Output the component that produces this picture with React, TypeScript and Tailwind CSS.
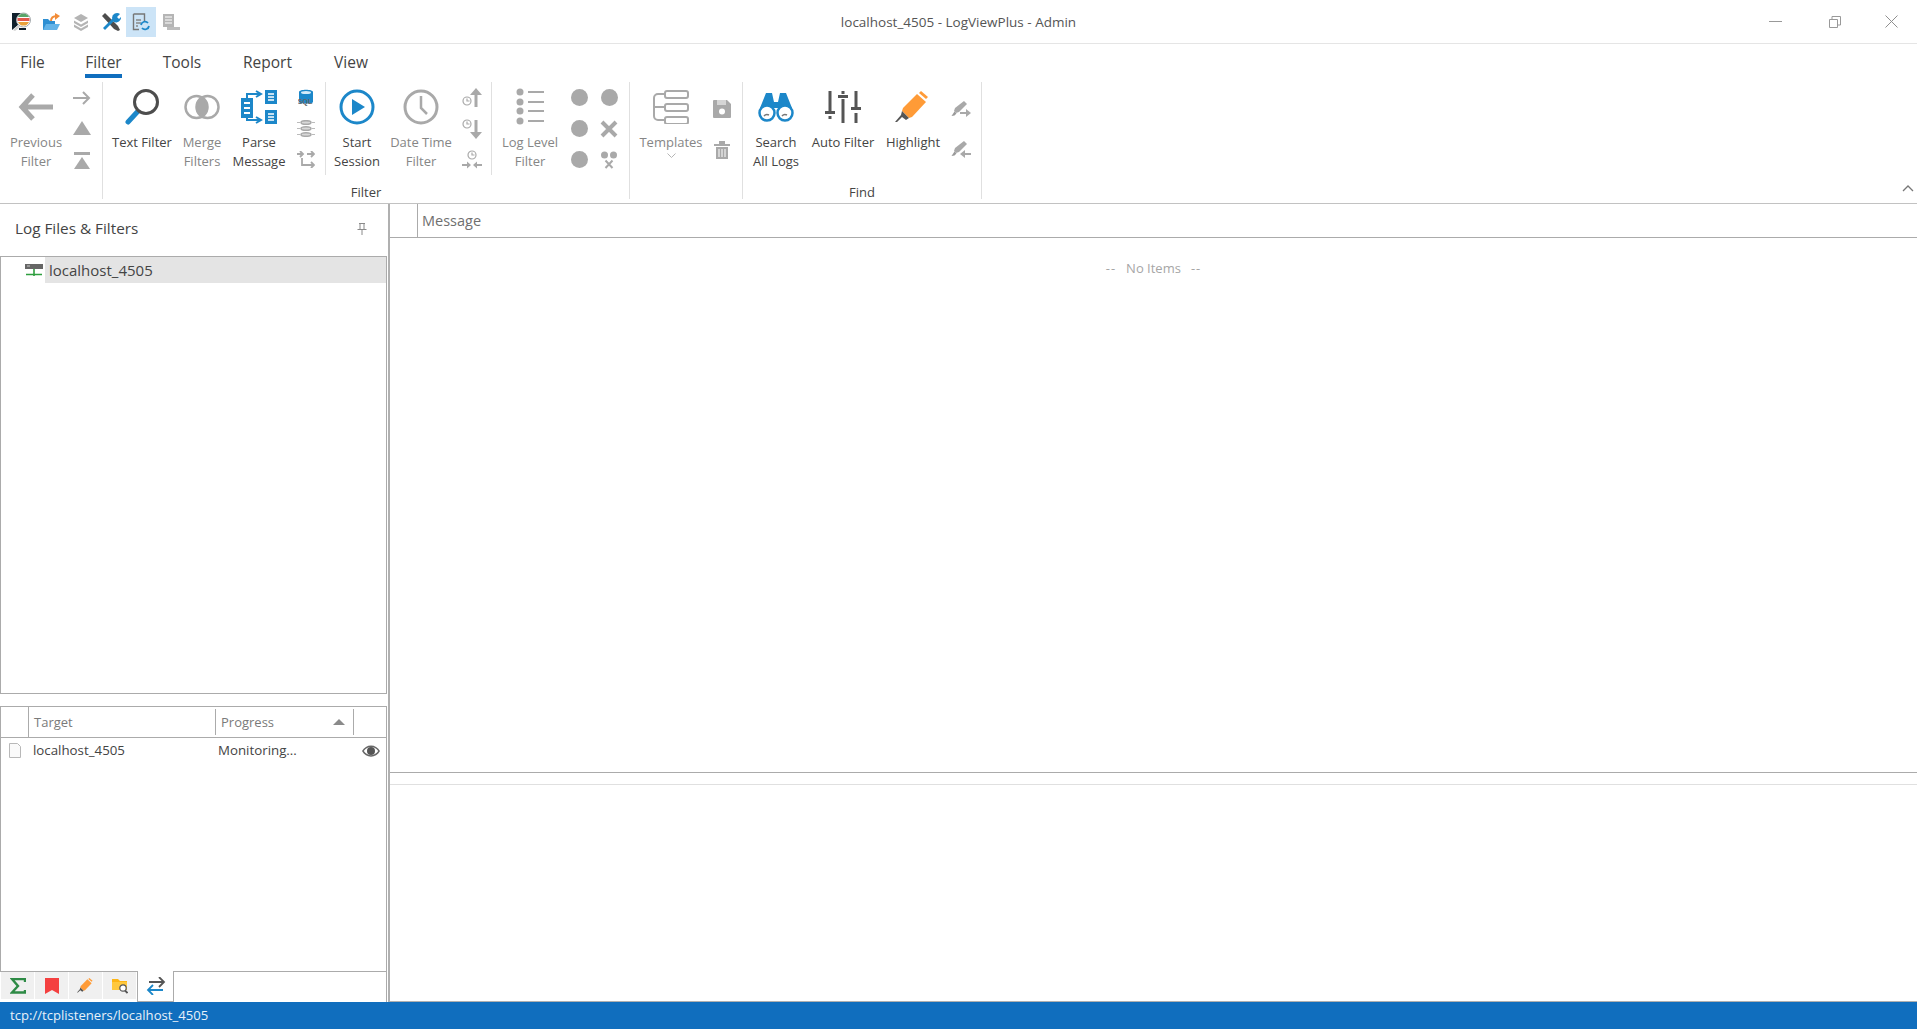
import React from 'react';

const GRAY = '#a9a9a9';
const BLUE = '#1c87c9';
const DARK = '#4d4d4d';

const Svg: React.FC<{ w: number; h: number; children: React.ReactNode }> = ({ w, h, children }) => (
  <svg width={w} height={h} viewBox={`0 0 ${w} ${h}`} fill="none" className="block shrink-0">
    {children}
  </svg>
);

// ---- quick access icons ----
const AppLogo = () => (
  <Svg w={20} h={20}>
    <path d="M1 1h10v4L7 8v5l-6 5z" fill="#10202c" />
    <path d="M8 18h7v-2H8z" fill="#10202c" />
    <circle cx="12.500" cy="8" r="7" fill="#fff" stroke="#a5abae" />
    <path d="M7 5a6 6 0 0 1 11 0z" fill="#5aa469" />
    <path d="M6.500 6h12v3h-12z" fill="#e2574c" />
    <path d="M7 10h11a6 6 0 0 1-11 0z" fill="#e9a13b" />
    <path d="M7 13l-5 5 2 1 5-4z" fill="#d2d2d2" />
  </Svg>
);
const OpenFolder = () => (
  <Svg w={19} h={18}>
    <path d="M1 6h5l2 2h5v9H1z" fill="#2e8fd2" />
    <path d="M4 11h14l-3 6H1z" fill="#63b3e8" />
    <path d="M9 8c0-3 2-5 6-5" stroke="#f28c38" strokeWidth="2" />
    <path d="M13 0l5 3-5 4z" fill="#f28c38" />
  </Svg>
);
const Layers = () => (
  <Svg w={16} h={18}>
    <path d="M8 1l7 4-7 4-7-4z" fill="#b4b4b4" />
    <path d="M1 7.500l7 4 7-4v2.500l-7 4-7-4z" fill="#b4b4b4" />
    <path d="M1 11.500l7 4 7-4v2.500l-7 4-7-4z" fill="#b4b4b4" />
  </Svg>
);
const Wrench = () => (
  <Svg w={20} h={20}>
    <path d="M1 4l3-3 13 13 2 4-2 1-4-2z" fill={DARK} />
    <path d="M2 16L12 6l2 2L4 18z" fill={BLUE} />
    <path d="M11 6a5 5 0 0 1 8-4l-3 3 2 2 2-2a5 5 0 0 1-7 5z" fill={BLUE} />
  </Svg>
);
const ReloadDoc = () => (
  <Svg w={18} h={18}>
    <path d="M1.500 1h11v7M7 16.500H1.500V1" stroke="#777" strokeWidth="1.400" />
    <path d="M4 7h5M4 10h5M4 13h2" stroke="#888" strokeWidth="1.300" />
    <path d="M9 12a4 4 0 0 1 7-2M17 13a4 4 0 0 1-7 2" stroke={BLUE} strokeWidth="1.800" />
  </Svg>
);
const ServerDoc = () => (
  <Svg w={18} h={18}>
    <path d="M1 1h11v13H1z" fill="#b5b5b5" />
    <path d="M3 4h7M3 7h7M3 10h7" stroke="#fff" strokeWidth="1.200" />
    <path d="M5 14h13v3H5z" fill="#bdbdbd" />
  </Svg>
);

// ---- ribbon icons ----
const BackArrow = () => (
  <Svg w={36} h={28}>
    <path d="M35 14H5M15 2L4 14l11 12" stroke={GRAY} strokeWidth="5" />
  </Svg>
);
const SmallArrow = () => (
  <Svg w={18} h={14}>
    <path d="M0 7h16M10 1l6 6-6 6" stroke={GRAY} strokeWidth="2" />
  </Svg>
);
const TriUp = () => (
  <Svg w={18} h={15}>
    <path d="M9 0l9 14H0z" fill={GRAY} />
  </Svg>
);
const TriTop = () => (
  <Svg w={18} h={18}>
    <path d="M1 1h16v3H1z" fill={GRAY} />
    <path d="M9 6l8 12H1z" fill={GRAY} />
  </Svg>
);
const Lens = () => (
  <Svg w={36} h={36}>
    <path d="M4 33l12-13" stroke={BLUE} strokeWidth="5" strokeLinecap="round" />
    <circle cx="22" cy="13" r="11.500" stroke={DARK} strokeWidth="3" fill="#fff" />
  </Svg>
);
const Merge = () => (
  <Svg w={36} h={26}>
    <path d="M18 3a12 12 0 0 1 0 20 12 12 0 0 1 0-20z" fill={GRAY} />
    <circle cx="12.500" cy="13" r="11" stroke={GRAY} strokeWidth="2.500" />
    <circle cx="23.500" cy="13" r="11" stroke={GRAY} strokeWidth="2.500" />
  </Svg>
);
const Parse = () => (
  <Svg w={36} h={36}>
    <path d="M0 9h12v20H0z" fill={BLUE} />
    <path d="M3 14h6M3 19h6M3 24h6" stroke="#fff" strokeWidth="1.800" />
    <path d="M24 1h12v14H24zM24 21h12v14H24z" fill={BLUE} />
    <path d="M27 5h6M27 8h6M27 11h6M27 25h6M27 28h6M27 31h6" stroke="#fff" strokeWidth="1.600" />
    <path d="M6 9V5h14M6 29v2h14M15 2l5 3-5 3M15 28l5 3-5 3" stroke={BLUE} strokeWidth="2" />
  </Svg>
);
const SqlDb = () => (
  <Svg w={16} h={17}>
    <path d="M1 3c0-3 14-3 14 0v10c0 2-14 2-14 0z" fill={BLUE} />
    <ellipse cx="8" cy="3.500" rx="5" ry="1.500" fill="#d5ebf8" />
    <text x="7" y="15" textAnchor="middle" fontSize="7" fontWeight="700" fill="#666" fontFamily="Liberation Sans, sans-serif">
      SQL
    </text>
  </Svg>
);
const DbStripes = () => (
  <Svg w={18} h={17}>
    <path d="M0 2.500h3M15 2.500h3M0 8.500h3M15 8.500h3M0 14.500h3M15 14.500h3" stroke="#bbb" strokeWidth="1.200" />
    <g stroke={GRAY} strokeWidth="1.500" fill="#d8d8d8">
      <ellipse cx="9" cy="2.500" rx="5" ry="1.800" />
      <ellipse cx="9" cy="8.500" rx="5" ry="1.800" />
      <ellipse cx="9" cy="14.500" rx="5" ry="1.800" />
    </g>
  </Svg>
);
const Branches = () => (
  <Svg w={18} h={17}>
    <path d="M0 3h6M3 0l3 3-3 3M10 3h7M14 0l3 3-3 3" stroke={GRAY} strokeWidth="1.800" />
    <path d="M5 7v7h12M14 11l3 3-3 3" stroke={GRAY} strokeWidth="1.800" />
  </Svg>
);
const PlayCircle = () => (
  <Svg w={36} h={36}>
    <circle cx="18" cy="18" r="16" stroke={BLUE} strokeWidth="3" />
    <path d="M13 10l13 8-13 8z" fill={BLUE} />
  </Svg>
);
const Clock = () => (
  <Svg w={36} h={36}>
    <circle cx="18" cy="18" r="16" stroke={GRAY} strokeWidth="3" />
    <path d="M18 7v12l6 6" stroke={GRAY} strokeWidth="2.500" />
  </Svg>
);
const MiniClock: React.FC<{ x: number; y: number }> = ({ x, y }) => (
  <g stroke={GRAY} strokeWidth="1.200">
    <circle cx={x} cy={y} r="4" />
    <path d={`M${x} ${y - 2.500}v2.500h2.500`} />
  </g>
);
const ClockUp = () => (
  <Svg w={20} h={20}>
    <MiniClock x={5} y={13} />
    <path d="M14 19V4" stroke={GRAY} strokeWidth="3" />
    <path d="M14 0l6 7H8z" fill={GRAY} />
  </Svg>
);
const ClockDown = () => (
  <Svg w={20} h={20}>
    <MiniClock x={5} y={5} />
    <path d="M14 1v15" stroke={GRAY} strokeWidth="3" />
    <path d="M14 20l6-7H8z" fill={GRAY} />
  </Svg>
);
const ClockIn = () => (
  <Svg w={20} h={20}>
    <MiniClock x={10} y={5} />
    <path d="M0 15h6M13 15h7" stroke={GRAY} strokeWidth="1.800" />
    <path d="M9 15l-4-3.500v7zM11 15l4-3.500v7z" fill={GRAY} />
  </Svg>
);
const LevelList = () => (
  <Svg w={30} h={38}>
    <g fill={GRAY}>
      <circle cx="5" cy="4" r="3.500" />
      <circle cx="5" cy="14" r="3.500" />
      <circle cx="5" cy="23" r="3.500" />
      <circle cx="5" cy="33" r="3.500" />
    </g>
    <path d="M13 4h16M13 14h16M13 23h16M13 33h16" stroke={GRAY} strokeWidth="2" />
  </Svg>
);
const Dot = () => <div className="w-[17px] h-[17px] rounded-full bg-[#a9a9a9]" />;
const BigX = () => (
  <Svg w={18} h={18}>
    <path d="M2 2l14 14M16 2L2 16" stroke={GRAY} strokeWidth="4" />
  </Svg>
);
const DotsX = () => (
  <Svg w={18} h={18}>
    <circle cx="4.500" cy="4" r="3.500" fill={GRAY} />
    <circle cx="13.500" cy="4" r="3.500" fill={GRAY} />
    <path d="M5.500 9.500l7 7.500M12.500 9.500l-7 7.500" stroke={GRAY} strokeWidth="2" />
  </Svg>
);
const TemplateTree = () => (
  <Svg w={36} h={34}>
    <g stroke={GRAY} strokeWidth="2">
      <rect x="12" y="1" width="23" height="7" rx="2" />
      <rect x="12" y="14" width="23" height="7" rx="2" />
      <rect x="12" y="27" width="23" height="7" rx="2" />
      <path d="M12 4H5a4 4 0 0 0-4 4v18a4 4 0 0 0 4 4h7M1 17h11" />
    </g>
  </Svg>
);
const Save = () => (
  <Svg w={18} h={18}>
    <path d="M0 1a1 1 0 0 1 1-1h13l4 4v13a1 1 0 0 1-1 1H1a1 1 0 0 1-1-1z" fill={GRAY} />
    <path d="M4 0h9v5H4z" fill="#d5d5d5" />
    <circle cx="9" cy="11.500" r="3" fill="#fff" />
  </Svg>
);
const Trash = () => (
  <Svg w={16} h={18}>
    <path d="M0 3h16v2H0zM5 0h6v3H5z" fill={GRAY} />
    <path d="M2 6h12v12H2z" fill={GRAY} />
    <path d="M5 8v8M8 8v8M11 8v8" stroke="#fff" strokeWidth="1" />
  </Svg>
);
const Binoculars = () => (
  <Svg w={36} h={30}>
    <path d="M8 1h6l2 9h4l2-9h6l6 15H2z" fill={BLUE} />
    <circle cx="9" cy="21" r="7.500" fill="#fff" stroke={BLUE} strokeWidth="2.500" />
    <circle cx="27" cy="21" r="7.500" fill="#fff" stroke={BLUE} strokeWidth="2.500" />
    <path d="M6 24a4 4 0 0 1 5-1M24 24a4 4 0 0 1 5-1" stroke="#777" strokeWidth="1.500" />
  </Svg>
);
const Sliders = () => (
  <Svg w={36} h={32}>
    <g stroke="#555" strokeWidth="3">
      <path d="M5 0v20M5 25v3M18 0v3M18 8v24M31 0v16M31 22v10" />
      <path d="M0 21.500h10M13 5.500h10M26 17.500h10" />
    </g>
  </Svg>
);
const Marker: React.FC<{ size?: number }> = ({ size = 36 }) => (
  <svg width={size} height={size} viewBox="0 0 36 36" fill="none" className="block shrink-0">
    <path d="M26 2l7 6-2 2-7-6z" fill="#ff9b37" />
    <path d="M22 5l9 8-14 15-3 1-7-7 1-3z" fill="#ff9b37" />
    <path d="M7 22l7 7-3 2-4-3-5 5H0l6-7z" fill="#555" />
  </svg>
);
const GrayPen: React.FC<{ back?: boolean }> = ({ back }) => (
  <Svg w={20} h={18}>
    <path d="M13 0l3 3-8 8-3 1-2-2 1-3z" fill={GRAY} />
    <path d="M3.500 10.500l2 2-2 2-3 .5z" fill="#999" />
    {back ? (
      <>
        <path d="M20 13h-8" stroke={GRAY} strokeWidth="2" />
        <path d="M9 13l5-4v8z" fill={GRAY} />
      </>
    ) : (
      <>
        <path d="M9 12h8" stroke={GRAY} strokeWidth="2" />
        <path d="M20 12l-5-4v8z" fill={GRAY} />
      </>
    )}
  </Svg>
);

// ---- ribbon pieces ----
const LargeButton: React.FC<{
  width: string;
  lines: string[];
  disabled?: boolean;
  icon: React.ReactNode;
  chevron?: boolean;
}> = ({ width, lines, disabled, icon, chevron }) => (
  <div className={`${width} shrink-0 flex flex-col items-center`}>
    <div className="h-[51px] flex items-center justify-center pb-[1px]">{icon}</div>
    {lines.map((line) => (
      <div key={line} className={`h-[19px] leading-[19px] text-[13px] whitespace-nowrap ${disabled ? 'text-[#868686]' : 'text-[#444444]'}`}>
        {line}
      </div>
    ))}
    {chevron && (
      <svg width="9" height="5" viewBox="0 0 9 5" fill="none" className="mt-[1px]">
        <path d="M.5.5l4 4 4-4" stroke="#b5b5b5" />
      </svg>
    )}
  </div>
);

const SmallColumn: React.FC<{ width: string; slot?: string; pad?: string; items: React.ReactNode[] }> = ({
  width,
  slot = 'h-[31px]',
  pad = '',
  items,
}) => (
  <div className={`${width} ${pad} shrink-0 flex flex-col items-center`}>
    {items.map((item, i) => (
      <div key={i} className={`${slot} flex items-center justify-center`}>
        {item}
      </div>
    ))}
  </div>
);

const GroupLabel: React.FC<{ text: string }> = ({ text }) => (
  <div className="flex-1 min-h-0 text-center leading-[20px] pt-[7px] text-[13px] text-[#444444]">{text}</div>
);

const Ribbon: React.FC = () => (
  <div className="h-[124px] shrink-0 flex pt-[2px] border-b border-[#c2c2c2]">
    <div className="w-[103px] h-[117px] shrink-0 flex border-r border-[#e0e0e0]">
      <LargeButton width="w-[72px]" lines={['Previous', 'Filter']} disabled icon={<BackArrow />} />
      <SmallColumn width="w-[20px]" items={[<SmallArrow />, <TriUp />, <TriTop />]} />
    </div>

    <div className="w-[527px] h-[117px] shrink-0 flex flex-col border-r border-[#e0e0e0]">
      <div className="h-[93px] shrink-0 flex">
        <div className="w-[223px] shrink-0 flex border-r border-[#e0e0e0]">
          <LargeButton width="w-[78px]" lines={['Text Filter']} icon={<Lens />} />
          <LargeButton width="w-[42px]" lines={['Merge', 'Filters']} disabled icon={<Merge />} />
          <LargeButton width="w-[72px]" lines={['Parse', 'Message']} icon={<Parse />} />
          <SmallColumn width="w-[22px]" items={[<SqlDb />, <DbStripes />, <Branches />]} />
        </div>
        <div className="w-[166px] shrink-0 flex border-r border-[#e0e0e0]">
          <LargeButton width="w-[62px]" lines={['Start', 'Session']} icon={<PlayCircle />} />
          <LargeButton width="w-[66px]" lines={['Date Time', 'Filter']} disabled icon={<Clock />} />
          <SmallColumn width="w-[36px]" items={[<ClockUp />, <ClockDown />, <ClockIn />]} />
        </div>
        <div className="flex-1 flex">
          <LargeButton width="w-[76px]" lines={['Log Level', 'Filter']} disabled icon={<LevelList />} />
          <SmallColumn width="w-[22px]" items={[<Dot />, <Dot />, <Dot />]} />
          <SmallColumn width="w-[38px]" items={[<Dot />, <BigX />, <DotsX />]} />
        </div>
      </div>
      <GroupLabel text="Filter" />
    </div>

    <div className="w-[113px] h-[117px] shrink-0 flex border-r border-[#e0e0e0]">
      <LargeButton width="w-[82px]" lines={['Templates']} disabled chevron icon={<TemplateTree />} />
      <SmallColumn width="w-[20px]" slot="h-[41px]" pad="pt-[6px]" items={[<Save />, <Trash />]} />
    </div>

    <div className="w-[239px] h-[117px] shrink-0 flex flex-col border-r border-[#e0e0e0]">
      <div className="h-[93px] shrink-0 flex">
        <LargeButton width="w-[66px]" lines={['Search', 'All Logs']} icon={<Binoculars />} />
        <LargeButton width="w-[68px]" lines={['Auto Filter']} icon={<Sliders />} />
        <LargeButton width="w-[72px]" lines={['Highlight']} icon={<Marker />} />
        <SmallColumn width="w-[24px]" slot="h-[40px]" pad="pt-[8px]" items={[<GrayPen />, <GrayPen back />]} />
      </div>
      <GroupLabel text="Find" />
    </div>

    <div className="flex-1 flex justify-end items-end pr-[3px] pb-[11px]">
      <svg width="12" height="7" viewBox="0 0 12 7" fill="none">
        <path d="M1 6l5-5 5 5" stroke="#777" strokeWidth="1.300" />
      </svg>
    </div>
  </div>
);

// ---- title bar / tabs ----
const TitleBar: React.FC = () => (
  <div className="h-[44px] shrink-0 grid grid-cols-[1fr_auto_1fr] items-center border-b border-[#e5e5e5]">
    <div className="flex items-center pl-[6px]">
      {[<AppLogo />, <OpenFolder />, <Layers />, <Wrench />, <ReloadDoc />, <ServerDoc />].map((icon, i) => (
        <div key={i} className={`w-[30px] h-[30px] flex items-center justify-center ${i === 4 ? 'bg-[#cce4f7]' : ''}`}>
          {icon}
        </div>
      ))}
    </div>
    <div className="text-[13.5px] text-[#555555] pt-[1px]">localhost_4505 - LogViewPlus - Admin</div>
    <div className="flex justify-end items-center text-[#8f8f8f]">
      <div className="w-[58px] flex justify-center">
        <svg width="13" height="1" viewBox="0 0 13 1">
          <path d="M0 .5h13" stroke="#999" />
        </svg>
      </div>
      <div className="w-[61px] flex justify-center">
        <svg width="12" height="12" viewBox="0 0 12 12" fill="none">
          <path d="M.5 3.500h8v8h-8zM3 3.500v-3h8.500v8.500h-3" stroke="#999" />
        </svg>
      </div>
      <div className="w-[52px] flex justify-center">
        <svg width="13" height="13" viewBox="0 0 13 13" fill="none">
          <path d="M.5.5l12 12M12.500.5l-12 12" stroke="#8f8f8f" />
        </svg>
      </div>
    </div>
  </div>
);

const tabs = [
  { name: 'File', width: 'w-[25px]' },
  { name: 'Filter', width: 'w-[37px]' },
  { name: 'Tools', width: 'w-[40px]' },
  { name: 'Report', width: 'w-[51px]' },
  { name: 'View', width: 'w-[36px]' },
];

const TabRow: React.FC = () => (
  <div className="h-[36px] shrink-0 flex gap-[40px] pl-[20px] text-[15.5px] text-[#444444]">
    {tabs.map((tab) => (
      <div
        key={tab.name}
        className={`${tab.width} h-[34px] pt-[6px] leading-[25px] flex justify-center whitespace-nowrap border-b-[4px] ${
          tab.name === 'Filter' ? 'border-[#106ebe]' : 'border-transparent'
        }`}
      >
        {tab.name}
      </div>
    ))}
  </div>
);

// ---- left panel ----
const ServerIcon = () => (
  <Svg w={18} h={13}>
    <path d="M0 0h18v5H0z" fill="#666" />
    <path d="M2 2h3" stroke="#ccc" strokeWidth="1" />
    <path d="M9 5v7M1 10.500h16" stroke="#2e9e3f" strokeWidth="1.600" />
  </Svg>
);
const FileIcon = () => (
  <Svg w={12} h={15}>
    <path d="M.5.500h8l3 3v11H.5z" fill="#fafafa" stroke="#b8b8b8" />
  </Svg>
);
const Eye = () => (
  <Svg w={18} h={12}>
    <path d="M0 6c4-7.500 14-7.500 18 0-4 7.500-14 7.500-18 0z" fill="#666" />
    <path d="M1.800 6c3.500-5.500 11-5.500 14.400 0-3.400 5.500-11 5.500-14.400 0z" fill="#fff" />
    <circle cx="9" cy="6" r="4" fill="#555" />
  </Svg>
);
const PinIcon = () => (
  <Svg w={10} h={12}>
    <path d="M2 .5h6M3 1v5M7 1v5M.5 6.500h9M5 7v5" stroke="#8a8a8a" />
  </Svg>
);
const Sigma = () => (
  <Svg w={16} h={16}>
    <path d="M15 4V1H2l6 7-6 6.500h13V12" stroke="#2e8b46" strokeWidth="2.400" />
  </Svg>
);
const Bookmark = () => (
  <Svg w={14} h={16}>
    <path d="M0 0h14v16l-7-4-7 4z" fill="#f44040" />
  </Svg>
);
const FolderSearch = () => (
  <Svg w={16} h={16}>
    <path d="M0 1h6l2 2h7v9H0z" fill="#fdb515" />
    <path d="M0 4h15v8H0z" fill="#ffc83d" />
    <circle cx="11" cy="10" r="3.200" fill="#fff" stroke="#555" strokeWidth="1.200" />
    <path d="M13 12.500l2.500 2.500" stroke="#555" strokeWidth="1.800" />
  </Svg>
);
const SwapArrows = () => (
  <Svg w={20} h={18}>
    <path d="M3 5h15M13 0l5 5-5 5" stroke="#555" strokeWidth="1.800" />
    <path d="M17 13H2M7 8l-5 5 5 5" stroke={BLUE} strokeWidth="1.800" />
  </Svg>
);

const LeftPanel: React.FC = () => (
  <div className="w-[387px] shrink-0 flex flex-col">
    <div className="h-[52px] shrink-0 flex items-center justify-between pl-[15px] pr-[20px] pb-[3px] text-[15.3px] text-[#444444]">
      <span>Log Files &amp; Filters</span>
      <PinIcon />
    </div>

    <div className="h-[438px] shrink-0 border border-[#ababab]">
      <div className="flex items-center h-[26px]">
        <div className="w-[44px] pl-[24px] shrink-0">
          <ServerIcon />
        </div>
        <div className="flex-1 h-full pl-[4px] leading-[26px] bg-[#e4e4e4] text-[15px] text-[#444444]">localhost_4505</div>
      </div>
    </div>

    <div className="h-[12px] shrink-0" />

    <div className="flex-1 flex flex-col border-x border-t border-[#ababab] min-h-0">
      <div className="h-[31px] shrink-0 flex items-center border-b border-[#ababab] text-[13px] text-[#7a7a7a]">
        <div className="w-[28px] h-full border-r border-[#ababab]" />
        <div className="w-[187px] pl-[5px] h-[26px] leading-[26px] border-r border-[#ababab]">Target</div>
        <div className="w-[138px] h-[26px] pl-[5px] pr-[8px] flex items-center justify-between border-r border-[#ababab]">
          <span className="pt-[1px]">Progress</span>
          <svg width="12" height="6" viewBox="0 0 12 6">
            <path d="M6 0l6 6H0z" fill="#8a8a8a" />
          </svg>
        </div>
      </div>
      <div className="h-[26px] flex items-center text-[13.3px] text-[#444444]">
        <div className="w-[32px] pl-[8px] shrink-0 pb-[2px]">
          <FileIcon />
        </div>
        <div className="w-[185px] shrink-0">localhost_4505</div>
        <div className="flex-1">Monitoring...</div>
        <div className="pr-[6px] pb-[1px]">
          <Eye />
        </div>
      </div>
    </div>

    <div className="h-[31px] shrink-0 flex">
      <div className="flex items-start pl-[1px] border-t border-[#ababab] h-full">
        {[<Sigma />, <Bookmark />, <Marker size={17} />, <FolderSearch />].map((icon, i) => (
          <div key={i} className="w-[33px] h-[27px] mr-[1px] bg-[#f0f0f0] flex items-center justify-center">
            {icon}
          </div>
        ))}
      </div>
      <div className="w-[37px] h-full flex items-center justify-center border-x border-b border-[#ababab] pb-[1px]">
        <SwapArrows />
      </div>
      <div className="flex-1 border-t border-r border-[#ababab]" />
    </div>
  </div>
);

// ---- right panel ----
const RightPanel: React.FC = () => (
  <div className="flex-1 ml-[1px] flex flex-col border-l-2 border-b border-[#b0b0b0] min-w-0">
    <div className="h-[34px] shrink-0 flex border-b border-[#ababab]">
      <div className="w-[28px] border-r border-[#ababab]" />
      <div className="pl-[4px] leading-[33px] text-[14.5px] text-[#6f6f6f]">Message</div>
    </div>
    <div className="h-[535px] shrink-0 border-b border-[#ababab] flex justify-center gap-[10px] pt-[21px] text-[13px] text-[#a6a6a6]">
      <span className="tracking-[1px]">--</span>
      <span>No Items</span>
      <span className="tracking-[1px]">--</span>
    </div>
    <div className="h-[12px] shrink-0 border-b border-[#e0e0e0]" />
    <div className="flex-1" />
  </div>
);

export default function App() {
  return (
    <div className="w-[1917px] h-[1029px] overflow-hidden flex flex-col bg-white font-['Open_Sans',sans-serif]">
      <TitleBar />
      <TabRow />
      <Ribbon />
      <div className="flex-1 min-h-0 flex">
        <LeftPanel />
        <RightPanel />
      </div>
      <div className="h-[27px] shrink-0 bg-[#106ebe] pl-[10px] leading-[27px] text-[13.1px] text-[#e8f1f9]">tcp://tcplisteners/localhost_4505</div>
    </div>
  );
}
